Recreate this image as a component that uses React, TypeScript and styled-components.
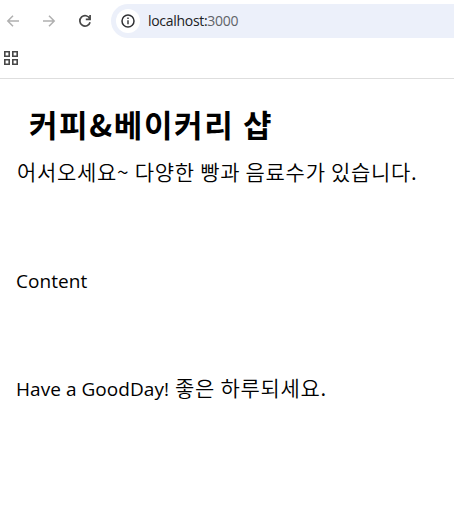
import React from "react";
import styled, { createGlobalStyle } from "styled-components";

const GlobalStyle = createGlobalStyle`
  * { box-sizing: border-box; }
  html, body, #root { margin: 0; padding: 0; background: #fff; }
  body { overflow: hidden; }
`;

const Window = styled.div`
  display: flex;
  flex-direction: column;
  height: 505px;
  background: #fff;
  color: #000;
  font-family: "Open Sans", "Noto Sans CJK KR", sans-serif;
`;

const Toolbar = styled.div`
  display: flex;
  align-items: center;
  height: 34px;
  margin-top: 4px;
`;

const NavButtons = styled.div`
  display: flex;
  align-items: center;
  gap: 20px;
  padding-left: 5px;
  width: 111px;
`;

const NavIcon = styled.svg<{ $disabled?: boolean }>`
  flex: none;
  width: 16px;
  height: 16px;
  fill: none;
  stroke: ${(p) => (p.$disabled ? "#b0b0b0" : "#474747")};
  stroke-width: ${(p) => (p.$disabled ? 1.5 : 1.7)};
`;

const AddressBar = styled.div`
  flex: 1;
  display: flex;
  align-items: center;
  height: 34px;
  padding-left: 5px;
  background: #ecf0fa;
  border-radius: 17px 0 0 17px;
`;

const SiteInfo = styled.span`
  display: flex;
  align-items: center;
  justify-content: center;
  width: 24px;
  height: 24px;
  border-radius: 50%;
  background: #fff;
`;

const Url = styled.span`
  margin-left: 8px;
  font-size: 14px;
  line-height: 20px;
  letter-spacing: -0.3px;
  color: #202124;
`;

const Port = styled.span`
  color: #5f6368;
`;

const Bookmarks = styled.div`
  display: flex;
  align-items: center;
  height: 41px;
  padding-left: 4px;
  border-bottom: 1px solid #dedede;
`;

const Page = styled.main`
  display: flex;
  flex-direction: column;
  padding: 25px 16px 0;
`;

const Title = styled.h1`
  margin: 0 0 0 13px;
  font-family: "Noto Sans CJK KR", sans-serif;
  font-size: 31px;
  line-height: 40px;
  font-weight: 700;
  letter-spacing: 1.6px;
  white-space: nowrap;
`;

const Line = styled.p<{ $gap: number }>`
  margin: ${(p) => p.$gap}px 0 0;
  font-size: 19px;
  line-height: 30px;
  height: 30px;
  white-space: nowrap;
`;

const Latin = styled.span`
  letter-spacing: 0.05px;
`;

const Korean = styled.span`
  font-family: "Noto Sans CJK KR", sans-serif;
  font-size: 21px;
  font-weight: 350;
  letter-spacing: 0.7px;
`;

const Greeting = styled(Korean)`
  padding-left: 1px;
`;

export default function App() {
  return (
    <Window>
      <GlobalStyle />
      <Toolbar>
        <NavButtons>
          <NavIcon $disabled viewBox="0 0 16 16">
            <path d="M14 8H3M8 2.8 2.8 8 8 13.2" />
          </NavIcon>
          <NavIcon $disabled viewBox="0 0 16 16">
            <path d="M2 8h11M8 2.8 13.2 8 8 13.2" />
          </NavIcon>
          <NavIcon viewBox="0 0 16 16">
            <path d="M12.8 5.7A5.2 5.2 0 1 0 13.1 9.2M13.1 2v4.3H8.8" />
          </NavIcon>
        </NavButtons>
        <AddressBar>
          <SiteInfo>
            <svg width="14" height="14" viewBox="0 0 14 14" fill="none" stroke="#303134">
              <circle cx="7" cy="7" r="6" strokeWidth="1.5" />
              <path d="M7 6.2v4M7 3.5v1.5" strokeWidth="1.4" />
            </svg>
          </SiteInfo>
          <Url>
            localhost:<Port>3000</Port>
          </Url>
        </AddressBar>
      </Toolbar>
      <Bookmarks>
        <svg width="14" height="14" viewBox="0 0 14 14" fill="none" stroke="#474747" strokeWidth="1.6">
          <path d="M.8.8h4.4v4.4H.8zM8.8.8h4.4v4.4H8.8zM.8 8.8h4.4v4.4H.8zM8.8 8.8h4.4v4.4H8.8z" />
        </svg>
      </Bookmarks>
      <Page>
        <Title>커피&amp;베이커리 샵</Title>
        <Line $gap={12}>
          <Greeting>어서오세요~ 다양한 빵과 음료수가 있습니다.</Greeting>
        </Line>
        <Line $gap={80}>
          <Latin>Content</Latin>
        </Line>
        <Line $gap={76}>
          <Latin>Have a GoodDay! </Latin>
          <Greeting>좋은 하루되세요.</Greeting>
        </Line>
      </Page>
    </Window>
  );
}
